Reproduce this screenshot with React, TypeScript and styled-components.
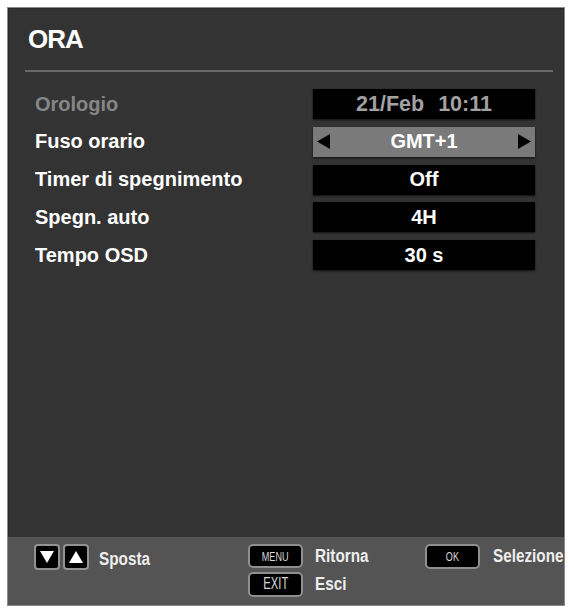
import React from "react";
import styled, { createGlobalStyle } from "styled-components";

const GlobalStyle = createGlobalStyle`
  html, body {
    margin: 0;
    padding: 0;
    background: #ffffff;
  }
  body {
    font-family: "Liberation Sans", Arial, sans-serif;
  }
`;

const Panel = styled.div`
  margin: 7px 0 0 7px;
  width: 558px;
  height: 599px;
  box-sizing: border-box;
  border: 1px solid #8a8a8a;
  box-shadow: inset 0 0 0 1px #2a2a2a;
  background: #333333;
  display: flex;
  flex-direction: column;
`;

const Title = styled.div`
  padding: 16px 0 0 20px;
  font-size: 26px;
  line-height: 30px;
  font-weight: bold;
  letter-spacing: -1px;
  color: #ffffff;
`;

const Separator = styled.div`
  margin: 16px 11px 0 17px;
  height: 2px;
  background: #686868;
`;

const List = styled.div`
  margin-top: 17px;
  padding-left: 27px;
  display: flex;
  flex-direction: column;
  gap: 7.75px;
`;

const Row = styled.div`
  display: flex;
  align-items: center;
  height: 30px;
`;

type LabelProps = { $disabled?: boolean };

const Label = styled.div<LabelProps>`
  width: 278px;
  font-size: 20px;
  font-weight: bold;
  color: ${(p) => (p.$disabled ? "#868686" : "#ffffff")};
`;

type ValueProps = { $selected?: boolean; $disabled?: boolean };

const Value = styled.div<ValueProps>`
  width: 222px;
  height: 30px;
  box-sizing: border-box;
  padding: 0 4px;
  display: flex;
  align-items: center;
  justify-content: ${(p) => (p.$selected ? "space-between" : "center")};
  background: ${(p) => (p.$selected ? "#7a7a7a" : "#000000")};
  box-shadow: 0 1px 2px rgba(0, 0, 0, 0.7);
  font-size: ${(p) => (p.$disabled ? "21.5px" : "20px")};
  font-weight: bold;
  color: ${(p) => (p.$disabled ? "#a2a2a2" : "#ffffff")};
`;

const Time = styled.span`
  margin-left: 14px;
`;

const Arrow = ({ dir }: { dir: "left" | "right" }) => (
  <svg width="13" height="15" viewBox="0 0 13 15">
    {dir === "left" ? (
      <polygon points="13,0 13,15 0,7.5" fill="#000" />
    ) : (
      <polygon points="0,0 0,15 13,7.5" fill="#000" />
    )}
  </svg>
);

const Spacer = styled.div`
  flex: 1;
`;

const Footer = styled.div`
  height: 68px;
  box-sizing: border-box;
  background: #545454;
  padding: 7px 0 0 26px;
  display: flex;
  align-items: flex-start;
  overflow: hidden;
`;

const MoveGroup = styled.div`
  width: 214px;
  flex-shrink: 0;
  display: flex;
  align-items: center;
  gap: 3px;
`;

const KeyIcon = styled.div`
  width: 26px;
  height: 26px;
  box-sizing: border-box;
  border: 2px solid #939393;
  border-radius: 4px;
  background: #000;
  display: flex;
  align-items: center;
  justify-content: center;
`;

const KeyGrid = styled.div`
  width: 177px;
  flex-shrink: 0;
  display: grid;
  grid-template-columns: 55px auto;
  grid-auto-rows: 24px;
  column-gap: 12px;
  row-gap: 4px;
  align-items: center;
`;

const OkGroup = styled.div`
  flex-shrink: 0;
  display: flex;
  align-items: center;
  gap: 13px;
`;

type KeyProps = { $big?: boolean };

const KeyButton = styled.div<KeyProps>`
  width: 55px;
  height: ${(p) => (p.$big ? "25px" : "24px")};
  box-sizing: border-box;
  border: 2px solid #8f8f8f;
  border-radius: 5px;
  background: #000;
  display: flex;
  align-items: center;
  justify-content: center;
  overflow: hidden;
`;

const KeyText = styled.span<KeyProps>`
  display: inline-block;
  font-size: ${(p) => (p.$big ? "16px" : "13px")};
  color: #d8d8d8;
  transform: scaleX(0.7);
`;

type HintProps = { $nudge?: number; $gap?: number };

const Hint = styled.span<HintProps>`
  display: inline-block;
  font-size: 18px;
  font-weight: bold;
  color: #eeeeee;
  transform: scaleX(0.85);
  transform-origin: left center;
  white-space: nowrap;
  padding-top: ${(p) => p.$nudge ?? 0}px;
  margin-left: ${(p) => p.$gap ?? 0}px;
`;

const Triangle = ({ up }: { up?: boolean }) => (
  <svg width="14" height="12" viewBox="0 0 14 12">
    {up ? (
      <polygon points="7,0 14,12 0,12" fill="#fff" />
    ) : (
      <polygon points="0,0 14,0 7,12" fill="#fff" />
    )}
  </svg>
);

export default function App() {
  return (
    <>
      <GlobalStyle />
      <Panel>
        <Title>ORA</Title>
        <Separator />
        <List>
          <Row>
            <Label $disabled>Orologio</Label>
            <Value $disabled>
              21/Feb<Time>10:11</Time>
            </Value>
          </Row>
          <Row>
            <Label>Fuso orario</Label>
            <Value $selected>
              <Arrow dir="left" />
              GMT+1
              <Arrow dir="right" />
            </Value>
          </Row>
          <Row>
            <Label>Timer di spegnimento</Label>
            <Value>Off</Value>
          </Row>
          <Row>
            <Label>Spegn. auto</Label>
            <Value>4H</Value>
          </Row>
          <Row>
            <Label>Tempo OSD</Label>
            <Value>30 s</Value>
          </Row>
        </List>
        <Spacer />
        <Footer>
          <MoveGroup>
            <KeyIcon>
              <Triangle />
            </KeyIcon>
            <KeyIcon>
              <Triangle up />
            </KeyIcon>
            <Hint $nudge={4} $gap={7}>
              Sposta
            </Hint>
          </MoveGroup>
          <KeyGrid>
            <KeyButton>
              <KeyText>MENU</KeyText>
            </KeyButton>
            <Hint>Ritorna</Hint>
            <KeyButton $big>
              <KeyText $big>EXIT</KeyText>
            </KeyButton>
            <Hint>Esci</Hint>
          </KeyGrid>
          <OkGroup>
            <KeyButton $big>
              <KeyText>OK</KeyText>
            </KeyButton>
            <Hint>Selezione</Hint>
          </OkGroup>
        </Footer>
      </Panel>
    </>
  );
}
